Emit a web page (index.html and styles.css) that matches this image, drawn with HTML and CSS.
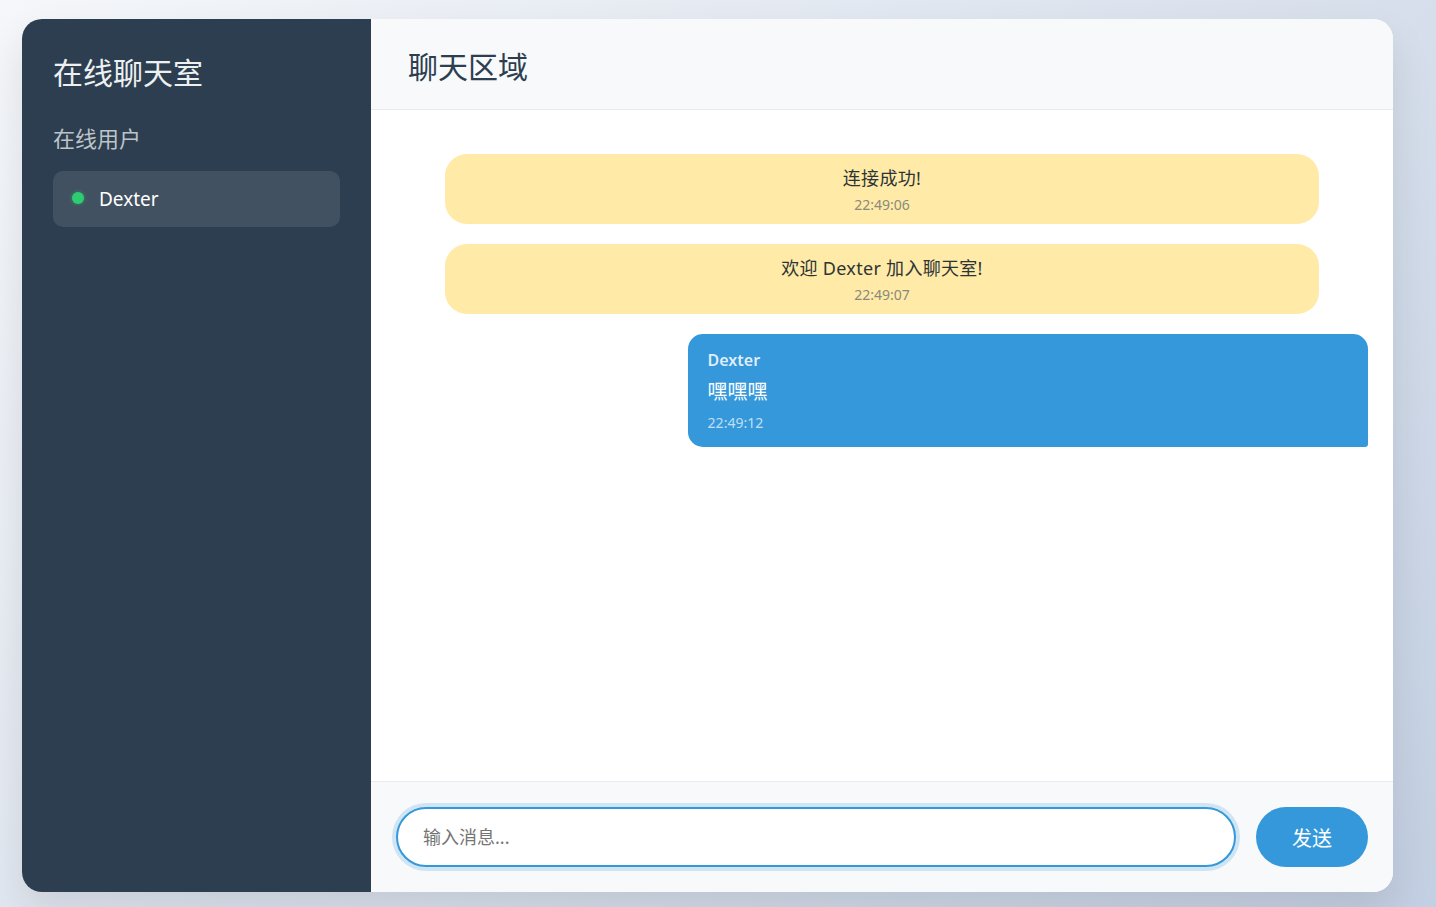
FILE: index.html
```html
<!DOCTYPE html>
<html lang="zh-CN">
<head>
<meta charset="utf-8">
<title>在线聊天室</title>
<link rel="stylesheet" href="styles.css">
</head>
<body>
<div class="app">
  <aside class="sidebar">
    <h1 class="app-title">在线聊天室</h1>
    <h3 class="users-title">在线用户</h3>
    <ul class="user-list">
      <li class="user-item"><span class="status-dot"></span><span class="user-name">Dexter</span></li>
    </ul>
  </aside>
  <main class="chat">
    <header class="chat-header">
      <h2 class="chat-title">聊天区域</h2>
    </header>
    <section class="messages">
      <div class="msg-system">
        <div class="msg-text">连接成功!</div>
        <div class="msg-time">22:49:06</div>
      </div>
      <div class="msg-system">
        <div class="msg-text">欢迎 Dexter 加入聊天室!</div>
        <div class="msg-time">22:49:07</div>
      </div>
      <div class="msg-own">
        <div class="own-name">Dexter</div>
        <div class="own-text">嘿嘿嘿</div>
        <div class="own-time">22:49:12</div>
      </div>
    </section>
    <footer class="composer">
      <input class="msg-input" type="text" placeholder="输入消息...">
      <button class="send-btn">发送</button>
    </footer>
  </main>
</div>
</body>
</html>
```

FILE: styles.css
```css
* { box-sizing: border-box; }

html, body { height: 100%; }

body {
  margin: 0;
  padding: 19px 0 0 22px;
  font-family: "Noto Sans", "Noto Sans CJK SC", sans-serif;
  background: linear-gradient(135deg, #f5f7fa 0%, #c3cfe2 100%);
  overflow: hidden;
}

.app {
  width: 1371px;
  height: 873px;
  display: flex;
  border-radius: 20px;
  overflow: hidden;
  background: #fff;
  box-shadow: 0 20px 40px rgba(0, 0, 0, 0.1);
}

.sidebar {
  width: 349px;
  flex-shrink: 0;
  background: #2c3e50;
  color: #fff;
  padding: 31px 31px;
  display: flex;
  flex-direction: column;
}

.app-title {
  margin: 0 0 27px;
  font-size: 30px;
  font-weight: 400;
  line-height: 46px;
  color: #ecf0f1;
}

.users-title {
  margin: 0 0 18px;
  font-size: 22px;
  font-weight: 400;
  line-height: 30px;
  color: #bdc3c7;
}

.user-list {
  list-style: none;
  margin: 0;
  padding: 0;
}

.user-item {
  height: 56px;
  display: flex;
  align-items: center;
  gap: 15px;
  padding: 0 19px;
  border-radius: 10px;
  background: rgba(255, 255, 255, 0.1);
}

.status-dot {
  width: 12px;
  height: 12px;
  border-radius: 50%;
  background: #2ecc71;
  box-shadow: 0 0 4px rgba(46, 204, 113, 0.5);
  margin-top: -3px;
}

.user-name {
  font-size: 19px;
  color: #fff;
}

.chat {
  flex: 1;
  display: flex;
  flex-direction: column;
  min-width: 0;
}

.chat-header {
  height: 91px;
  flex-shrink: 0;
  background: #f8f9fa;
  border-bottom: 1px solid #e9ecef;
  display: flex;
  align-items: center;
  padding: 2px 37px 0;
}

.chat-title {
  margin: 0;
  font-size: 30px;
  font-weight: 400;
  color: #2c3e50;
}

.messages {
  flex: 1;
  padding: 44px 25px 25px;
  display: flex;
  flex-direction: column;
  gap: 20px;
  overflow: hidden;
}

.msg-system {
  width: 90%;
  align-self: center;
  background: #ffeaa7;
  border-radius: 22px;
  padding: 12px 20px 9px;
  text-align: center;
}

.msg-text {
  font-size: 18px;
  line-height: 24px;
  color: #2d3436;
  letter-spacing: 0.3px;
}

.msg-time {
  margin-top: 5px;
  font-size: 14px;
  line-height: 20px;
  color: #8a8a7a;
}

.msg-own {
  width: 70%;
  align-self: flex-end;
  background: #3498db;
  color: #fff;
  border-radius: 15px 15px 3px 15px;
  padding: 15px 20px 14px;
}

.own-name {
  font-size: 16px;
  font-weight: 600;
  line-height: 22px;
  color: rgba(255, 255, 255, 0.85);
  margin-bottom: 6px;
}

.own-text {
  font-size: 20px;
  line-height: 30px;
}

.own-time {
  margin-top: 6px;
  font-size: 14px;
  line-height: 20px;
  color: rgba(255, 255, 255, 0.7);
}

.composer {
  flex-shrink: 0;
  background: #f8f9fa;
  border-top: 1px solid #e9ecef;
  padding: 25px 25px 25px 25px;
  display: flex;
  gap: 20px;
}

.msg-input {
  flex: 1;
  height: 60px;
  border: 2px solid #3498db;
  border-radius: 30px;
  padding: 0 25px;
  font-family: inherit;
  font-size: 18px;
  color: #2c3e50;
  background: #fff;
  outline: none;
  box-shadow: 0 0 0 4px rgba(52, 152, 219, 0.2);
}

.msg-input::placeholder {
  color: #757575;
}

.send-btn {
  width: 112px;
  height: 60px;
  border: none;
  border-radius: 30px;
  background: #3498db;
  color: #fff;
  font-family: inherit;
  font-size: 20px;
  cursor: pointer;
}
```
